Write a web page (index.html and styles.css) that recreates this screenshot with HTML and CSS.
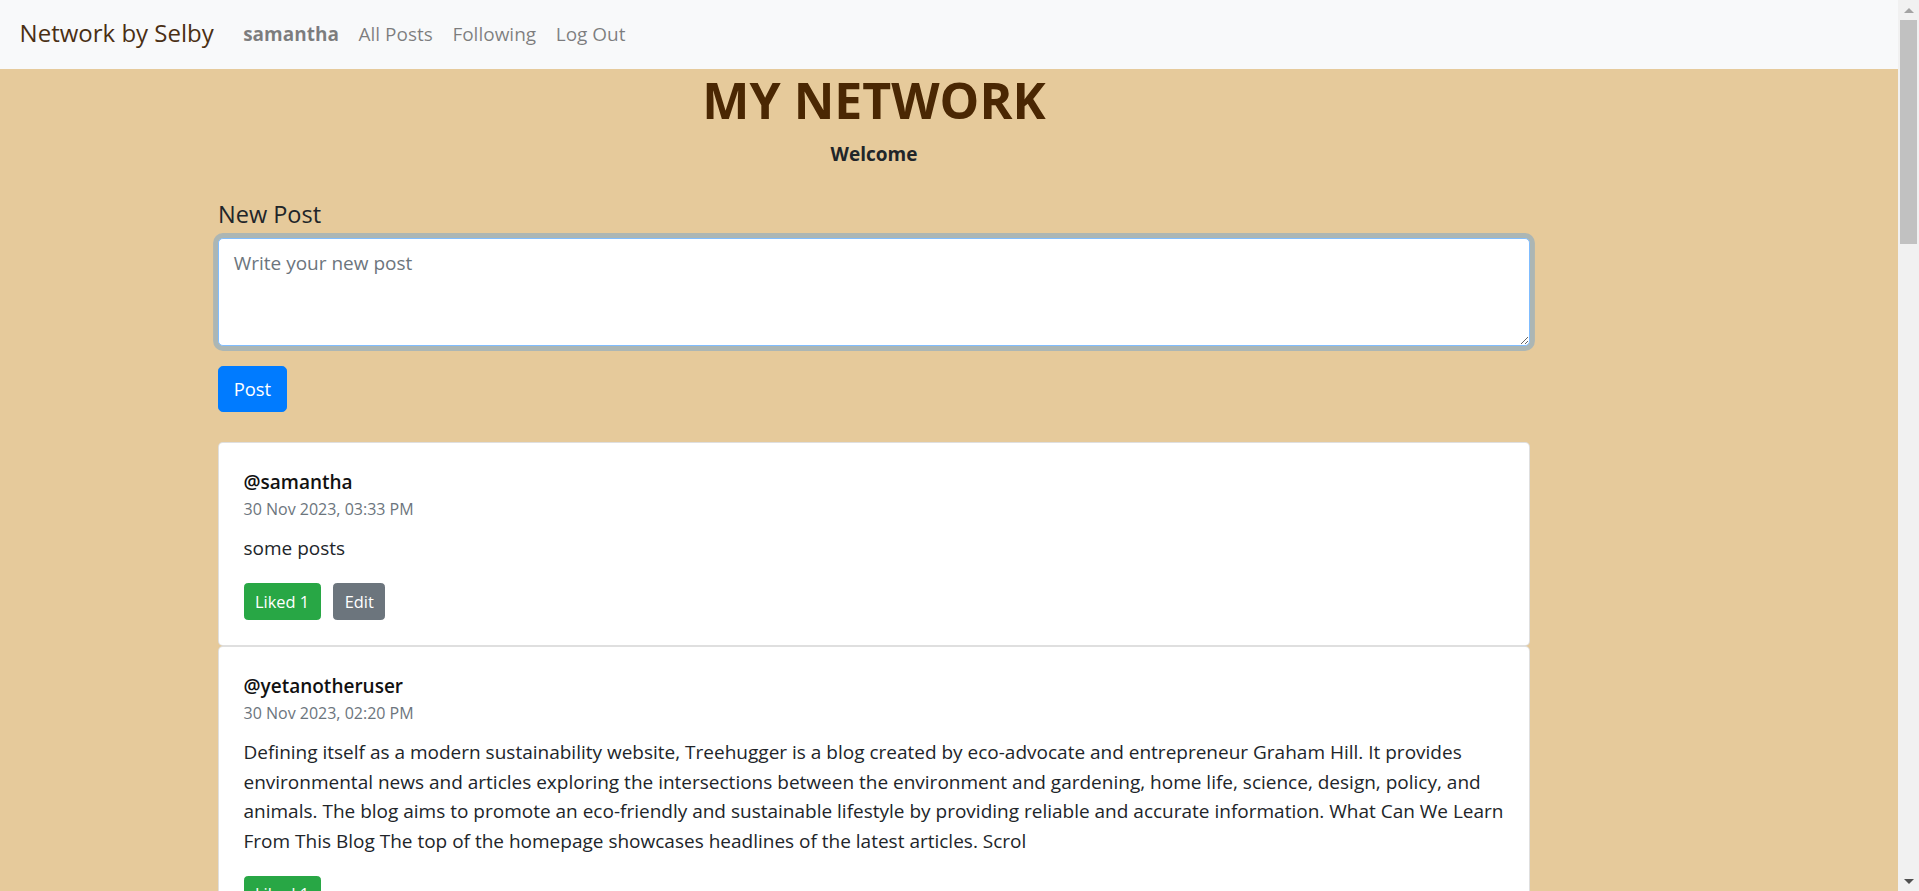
FILE: index.html
```html
<!DOCTYPE html>
<html lang="en">
<head>
<meta charset="utf-8">
<title>Network by Selby</title>
<link rel="stylesheet" href="styles.css">
</head>
<body>
<div class="page">
  <nav class="navbar">
    <a class="brand" href="#">Network by Selby</a>
    <ul class="nav">
      <li><a class="nav-link user" href="#">samantha</a></li>
      <li><a class="nav-link" href="#">All Posts</a></li>
      <li><a class="nav-link" href="#">Following</a></li>
      <li><a class="nav-link" href="#">Log Out</a></li>
    </ul>
  </nav>
  <main class="main">
    <h1 class="title">MY NETWORK</h1>
    <p class="welcome">Welcome</p>
    <h5 class="new-title">New Post</h5>
    <textarea class="post-input" placeholder="Write your new post"></textarea>
    <button class="btn btn-primary">Post</button>
    <div class="posts">
      <div class="card">
        <div class="username">@samantha</div>
        <div class="date">30 Nov 2023, 03:33 PM</div>
        <p class="content">some posts</p>
        <div class="actions">
          <button class="btn-sm btn-success">Liked 1</button>
          <button class="btn-sm btn-secondary">Edit</button>
        </div>
      </div>
      <div class="card">
        <div class="username">@yetanotheruser</div>
        <div class="date">30 Nov 2023, 02:20 PM</div>
        <p class="content">Defining itself as a modern sustainability website, Treehugger is a blog created by eco-advocate and entrepreneur Graham Hill. It provides environmental news and articles exploring the intersections between the environment and gardening, home life, science, design, policy, and animals. The blog aims to promote an eco-friendly and sustainable lifestyle by providing reliable and accurate information. What Can We Learn From This Blog The top of the homepage showcases headlines of the latest articles. Scrol</p>
        <div class="actions">
          <button class="btn-sm btn-success">Liked 1</button>
        </div>
      </div>
    </div>
  </main>
</div>
<div class="scrollbar">
  <span class="arrow arrow-up"></span>
  <span class="thumb"></span>
  <span class="track-fill"></span>
  <span class="arrow arrow-down"></span>
</div>
</body>
</html>
```

FILE: styles.css
```css
* { box-sizing: border-box; }

html, body {
  margin: 0;
  height: 100%;
  overflow: hidden;
}

body {
  display: flex;
  font-family: "Open Sans", "Noto Sans", sans-serif;
  font-size: 19px;
  line-height: 29.4px;
  color: #212529;
  background: #e6ca9b;
}

.page {
  flex: 1;
  height: 891px;
  overflow: hidden;
  background: #e6ca9b;
}

/* navbar */
.navbar {
  height: 69px;
  display: flex;
  align-items: center;
  padding: 0 19.6px;
  background: #f8f9fa;
}

.brand {
  font-size: 24px;
  line-height: 36.7px;
  color: #4a2f14;
  text-decoration: none;
  margin-right: 19.6px;
  margin-top: -2px;
}

.nav {
  list-style: none;
  display: flex;
  margin: 0;
  padding: 0;
}

.nav-link {
  display: block;
  padding: 0 9.8px;
  color: rgba(0, 0, 0, 0.5);
  text-decoration: none;
  font-size: 19px;
}

.nav-link.user { font-weight: 700; }

/* main column */
.main {
  width: 1312px;
  margin-left: 218px;
  display: flex;
  flex-direction: column;
  align-items: flex-start;
}

.title {
  align-self: stretch;
  text-align: center;
  margin: 0;
  font-size: 50px;
  line-height: 62px;
  font-weight: 700;
  color: #4a2703;
}

.welcome {
  align-self: stretch;
  text-align: center;
  margin: 9px 0 0;
  font-weight: 700;
}

.new-title {
  margin: 32px 0 0;
  font-size: 23.5px;
  line-height: 27.6px;
  font-weight: 400;
}

.post-input {
  display: block;
  width: 100%;
  height: 108px;
  margin-top: 9px;
  padding: 9.5px 14.7px;
  font-family: inherit;
  font-size: 19px;
  line-height: 29.4px;
  color: #495057;
  background: #fff;
  border: 1.2px solid #80bdff;
  border-radius: 4.9px;
  box-shadow: 0 0 0 4.9px rgba(0, 123, 255, 0.25);
  outline: none;
  resize: vertical;
}

.post-input::placeholder { color: #6c757d; opacity: 1; }

.btn {
  margin-top: 20px;
  padding: 7.3px 14.7px;
  font-family: inherit;
  font-size: 18.4px;
  line-height: 29.4px;
  border: 1.2px solid transparent;
  border-radius: 4.9px;
  cursor: pointer;
}

.btn-primary {
  color: #fff;
  background: #007bff;
  border-color: #007bff;
}

/* posts */
.posts {
  align-self: stretch;
  margin-top: 30px;
  display: flex;
  flex-direction: column;
}

.card {
  background: #fff;
  border: 1px solid rgba(0, 0, 0, 0.125);
  border-radius: 4.9px;
  padding: 24.5px 24.5px 25px;
}

.username {
  font-weight: 600;
  color: #111;
}

.date {
  font-size: 16px;
  line-height: 25.7px;
  color: #6c757d;
  margin-bottom: 11.3px;
}

.content {
  margin: 0 0 19.6px;
}

.actions {
  display: flex;
  gap: 12.5px;
}

.btn-sm {
  padding: 4.9px 10.5px;
  font-family: inherit;
  font-size: 16.4px;
  line-height: 25.7px;
  color: #fff;
  border: 1.2px solid transparent;
  border-radius: 3.7px;
  cursor: pointer;
}

.btn-success { background: #28a745; border-color: #28a745; }
.btn-secondary { background: #6c757d; border-color: #6c757d; }

/* scrollbar */
.scrollbar {
  width: 21px;
  height: 891px;
  flex: none;
  display: flex;
  flex-direction: column;
  align-items: center;
  background: #f1f1f1;
}

.arrow {
  width: 0;
  height: 0;
  border-left: 5px solid transparent;
  border-right: 5px solid transparent;
}

.arrow-up {
  margin-top: 8px;
  border-bottom: 5px solid #a3a3a3;
}

.thumb {
  margin-top: 7px;
  width: 17px;
  height: 224px;
  background: #c1c1c1;
}

.track-fill { flex: 1; }

.arrow-down {
  margin-bottom: 7px;
  border-top: 5px solid #505050;
}
```
